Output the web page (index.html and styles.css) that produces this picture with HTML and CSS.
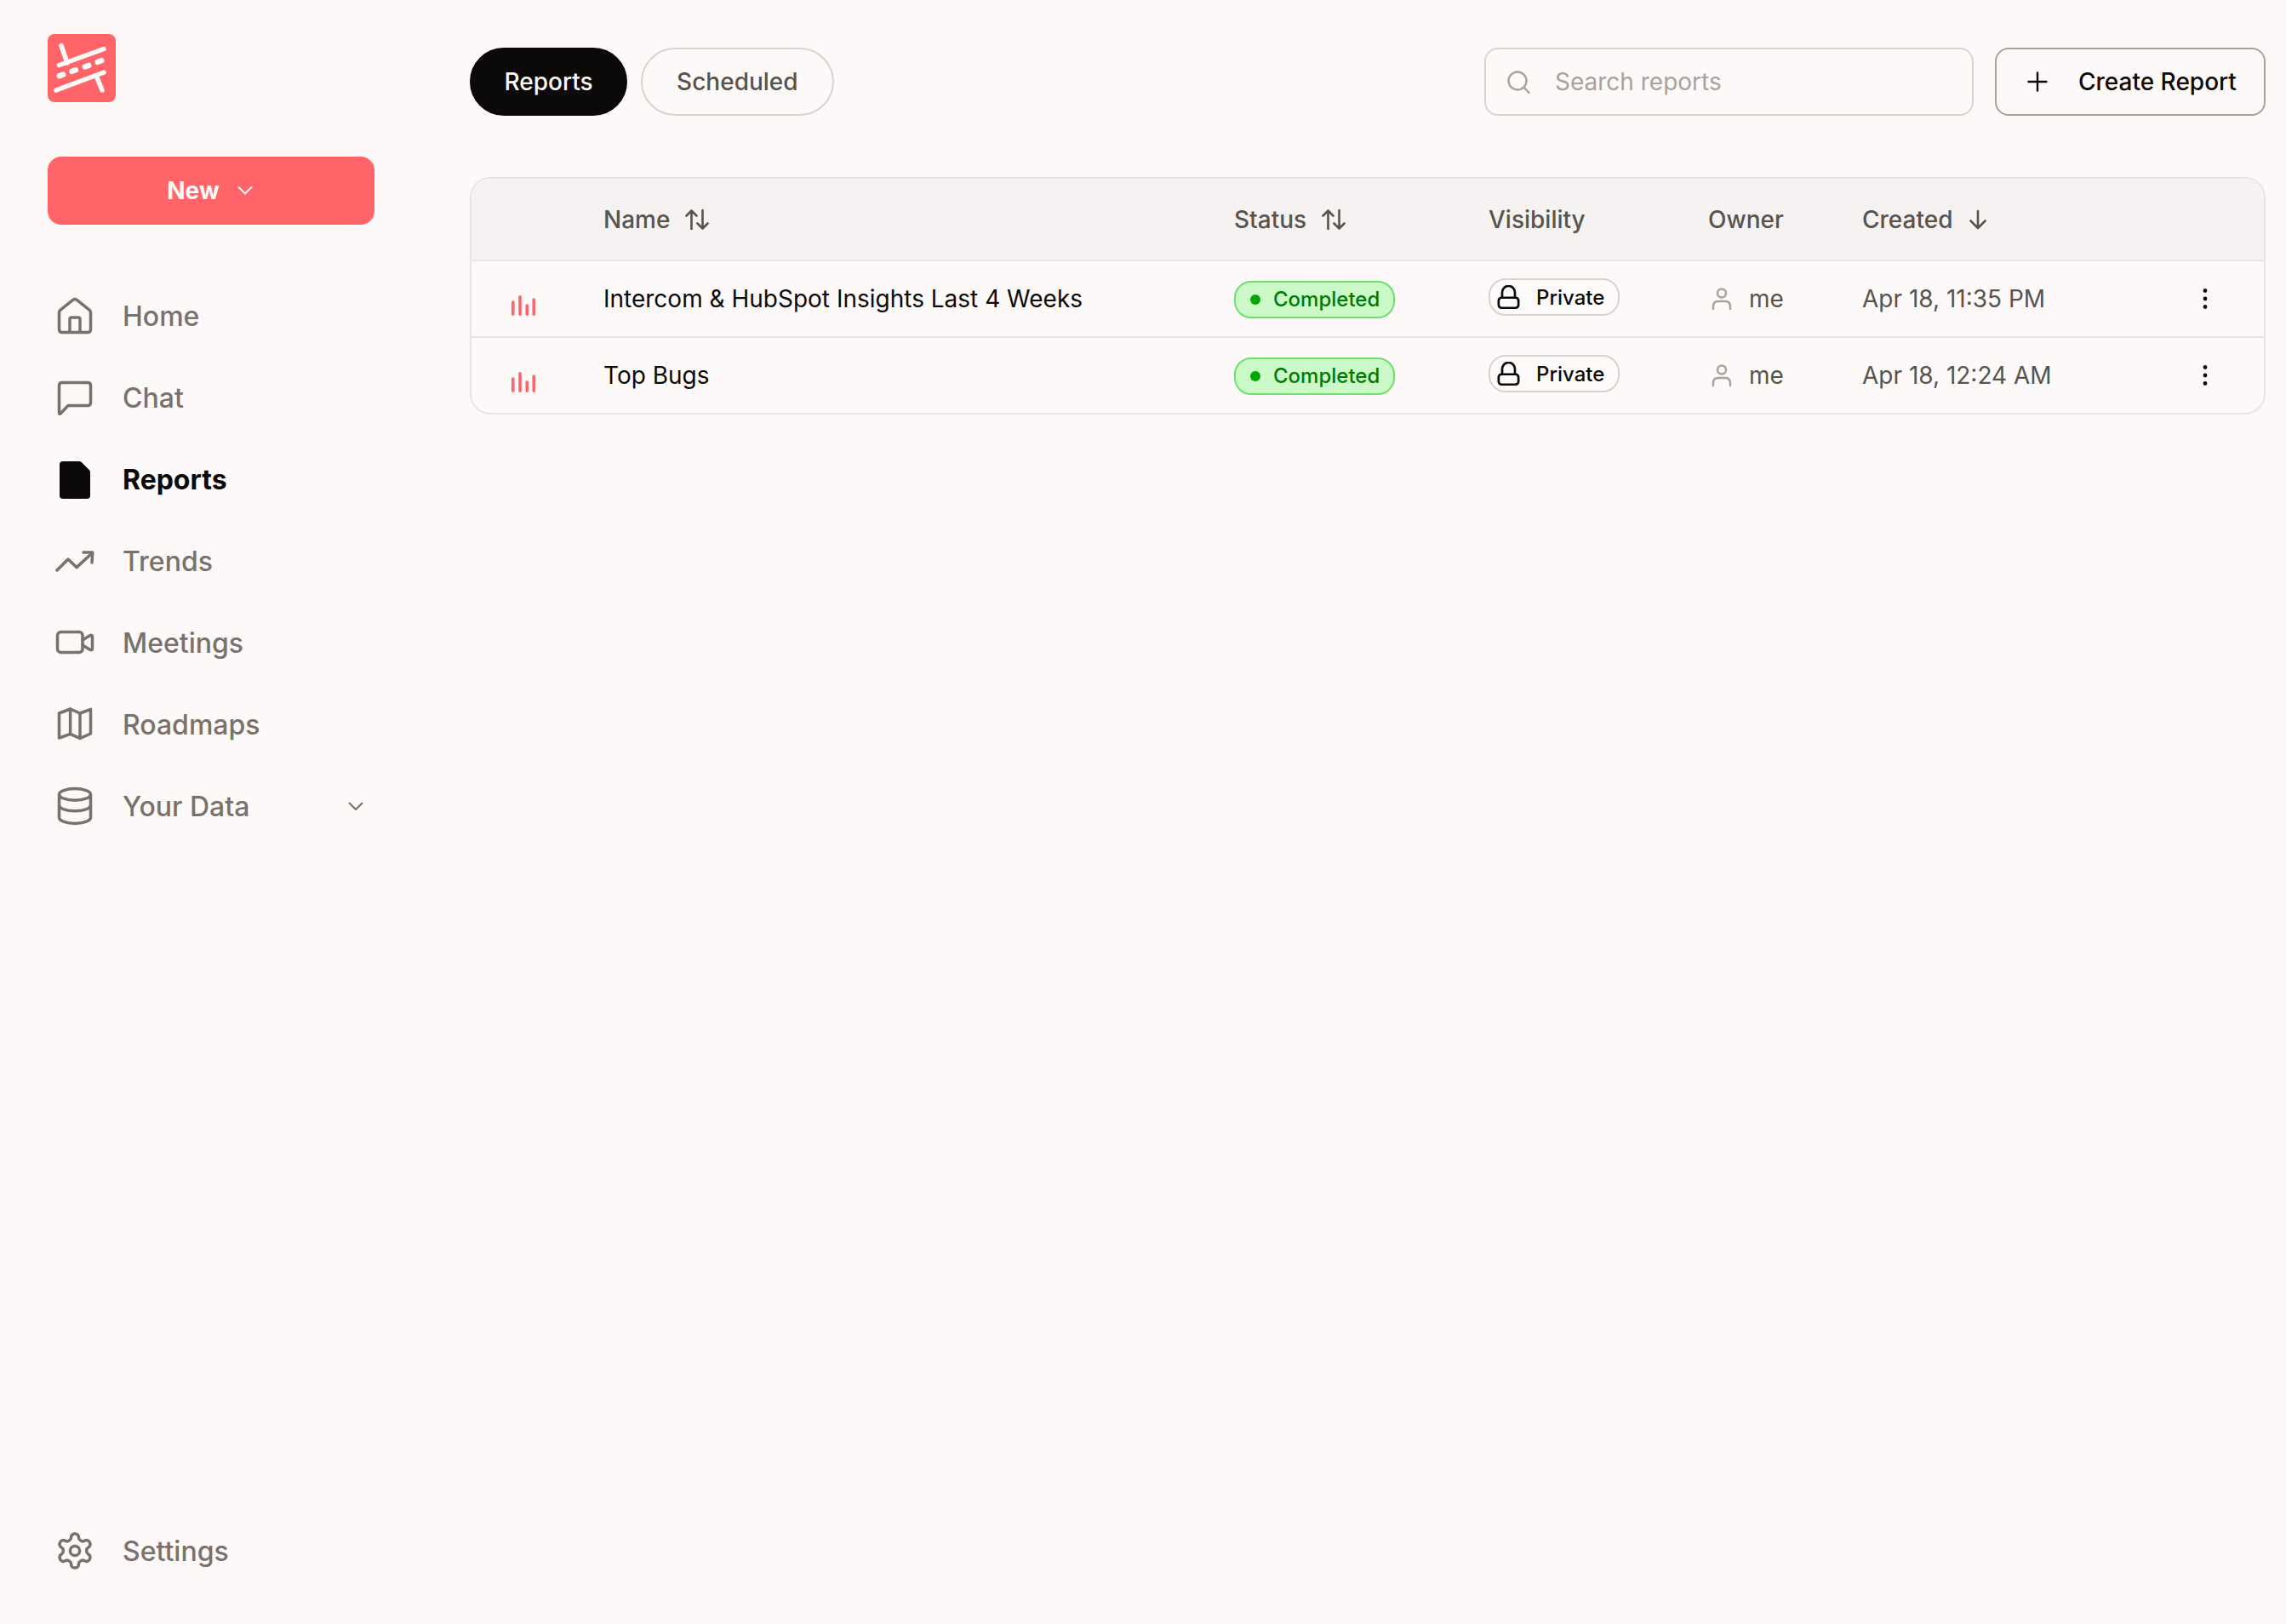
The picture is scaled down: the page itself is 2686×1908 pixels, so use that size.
FILE: index.html
```html
<!DOCTYPE html>
<html lang="en">
<head>
  <meta charset="UTF-8" />
  <title>Reports</title>
  <link rel="stylesheet" href="styles.css">
</head>
<body>
  <aside class="sidebar">
    <div class="logo">
      <svg viewBox="0 0 80 80" width="80" height="80">
        <rect width="80" height="80" rx="8" fill="#ff6568"/>
        <g stroke="#fdf9f8" stroke-width="5.5" stroke-linecap="round" fill="none">
          <path d="M16 13.5 23 34"/>
          <path d="M13.5 36.5 66 17.5"/>
          <path d="M13.8 49.1 18.2 47.5M28.5 43.8 32.9 42.2M43.8 38.5 48.2 36.9M58.8 32.8 63.2 31.2" stroke-width="6.5"/>
          <path d="M10 66 66 45"/>
          <path d="M57.5 50 64 66"/>
        </g>
      </svg>
    </div>

    <button class="new-btn">
      <span>New</span>
      <svg viewBox="0 0 24 24" width="24" height="24" fill="none" stroke="#fdf9f8" stroke-width="2" stroke-linecap="round" stroke-linejoin="round"><path d="M4.5 8 12 15.5 19.5 8"/></svg>
    </button>

    <nav class="side-nav">
      <a class="nav-item" href="#">
        <svg class="nav-icon" viewBox="0 0 24 24"><path d="M2.75 10.2Q2.75 9.2 3.5 8.6L11 2.6Q12 1.9 13 2.6L20.5 8.6Q21.25 9.2 21.25 10.2V20Q21.25 21.75 19.5 21.75H4.5Q2.75 21.75 2.75 20Z"/><path d="M9 21.75V14Q9 13 10 13H14Q15 13 15 14V21.75"/></svg>
        <span>Home</span>
      </a>
      <a class="nav-item" href="#">
        <svg class="nav-icon" viewBox="0 0 24 24"><path d="M4.5 3.25H19.5Q21.25 3.25 21.25 5V15Q21.25 16.75 19.5 16.75H8L3.5 21.5Q2.75 22.1 2.75 21V5Q2.75 3.25 4.5 3.25Z"/></svg>
        <span>Chat</span>
      </a>
      <a class="nav-item active" href="#">
        <svg class="nav-icon" viewBox="0 0 24 24"><path class="solid" d="M5 1.5H14.6Q15.4 1.5 16 2.1L20.4 6.5Q21 7.1 21 7.9V21.5Q21 23.5 19 23.5H5Q3 23.5 3 21.5V3.5Q3 1.5 5 1.5Z"/></svg>
        <span>Reports</span>
      </a>
      <a class="nav-item" href="#">
        <svg class="nav-icon" viewBox="0 0 24 24"><path d="M1.5 17.5 8 11 13 15.8 22 7.5"/><path d="M17 7H22.4L22 13"/></svg>
        <span>Trends</span>
      </a>
      <a class="nav-item" href="#">
        <svg class="nav-icon" viewBox="0 0 24 24"><rect x="1.75" y="5.75" width="14.75" height="12" rx="2"/><path d="M16.5 10.5 21 7.8Q22.25 7.3 22.25 8.5V15.5Q22.25 16.7 21 16.2L16.5 13.5"/></svg>
        <span>Meetings</span>
      </a>
      <a class="nav-item" href="#">
        <svg class="nav-icon" viewBox="0 0 24 24"><path d="M2.75 5.5 9.3 3 15 5.5 21.25 3.2V17.5L15 20.2 9.3 17.7 2.75 20Z"/><path d="M9.3 3V17.7M15 5.5V20.2"/></svg>
        <span>Roadmaps</span>
      </a>
      <a class="nav-item" href="#">
        <svg class="nav-icon" viewBox="0 0 24 24"><ellipse cx="12" cy="5.2" rx="9.25" ry="3.4"/><path d="M2.75 5.2V18.8C2.75 20.7 6.9 22.2 12 22.2S21.25 20.7 21.25 18.8V5.2"/><path d="M2.75 11.5C2.75 13.4 6.9 14.9 12 14.9S21.25 13.4 21.25 11.5"/></svg>
        <span>Your Data</span>
        <svg class="nav-caret" viewBox="0 0 24 24" width="32" height="32"><path d="M6.5 9.5 12 15 17.5 9.5"/></svg>
      </a>
    </nav>

    <a class="nav-item settings" href="#">
      <svg class="nav-icon" viewBox="0 0 24 24"><path d="M12.22 2h-.44a2 2 0 0 0-2 2v.18a2 2 0 0 1-1 1.73l-.43.25a2 2 0 0 1-2 0l-.15-.08a2 2 0 0 0-2.73.73l-.22.38a2 2 0 0 0 .73 2.73l.15.1a2 2 0 0 1 1 1.72v.51a2 2 0 0 1-1 1.74l-.15.09a2 2 0 0 0-.73 2.73l.22.38a2 2 0 0 0 2.73.73l.15-.08a2 2 0 0 1 2 0l.43.25a2 2 0 0 1 1 1.73V20a2 2 0 0 0 2 2h.44a2 2 0 0 0 2-2v-.18a2 2 0 0 1 1-1.73l.43-.25a2 2 0 0 1 2 0l.15.08a2 2 0 0 0 2.73-.73l.22-.39a2 2 0 0 0-.73-2.73l-.15-.08a2 2 0 0 1-1-1.74v-.5a2 2 0 0 1 1-1.74l.15-.09a2 2 0 0 0 .73-2.73l-.22-.38a2 2 0 0 0-2.73-.73l-.15.08a2 2 0 0 1-2 0l-.43-.25a2 2 0 0 1-1-1.73V4a2 2 0 0 0-2-2z"/><circle cx="12" cy="12" r="2.8"/></svg>
      <span>Settings</span>
    </a>
  </aside>

  <main class="content">
    <div class="toolbar">
      <div class="tabs">
        <button class="tab active">Reports</button>
        <button class="tab">Scheduled</button>
      </div>
      <div class="actions">
        <label class="search">
          <svg viewBox="0 0 28 28" width="28" height="28" fill="none" stroke="#a8a29e" stroke-width="2.4" stroke-linecap="round"><circle cx="13" cy="13" r="10.5"/><path d="M21 21 26.5 27"/></svg>
          <input type="text" placeholder="Search reports">
        </label>
        <button class="create-btn">
          <svg viewBox="0 0 24 24" width="24" height="24" fill="none" stroke="#0c0a09" stroke-width="2.4" stroke-linecap="round"><path d="M12 1.5V22.5M1.5 12H22.5"/></svg>
          <span>Create Report</span>
        </button>
      </div>
    </div>

    <div class="table">
      <div class="row head">
        <div></div>
        <div class="th">Name
          <svg class="sort" viewBox="0 0 28 24" width="28" height="24"><path d="M7.5 23V1.5M1.5 7.5 7.5 1.5 13.5 7.5"/><path d="M20.5 1V22.5M14.5 16.5 20.5 22.5 26.5 16.5"/></svg>
        </div>
        <div class="th">Status
          <svg class="sort" viewBox="0 0 28 24" width="28" height="24"><path d="M7.5 23V1.5M1.5 7.5 7.5 1.5 13.5 7.5"/><path d="M20.5 1V22.5M14.5 16.5 20.5 22.5 26.5 16.5"/></svg>
        </div>
        <div class="th">Visibility</div>
        <div class="th">Owner</div>
        <div class="th">Created
          <svg class="sort" viewBox="0 0 24 24" width="24" height="24"><path d="M12 2V22M3.5 13.5 12 22 20.5 13.5"/></svg>
        </div>
        <div></div>
      </div>

      <div class="row">
        <div class="type-cell">
          <svg class="bars" viewBox="0 0 28 24" width="28" height="24"><path d="M1.8 8V22.2M10 1.8V22.2M18.2 12V22.2M26.2 5V22.2"/></svg>
        </div>
        <div class="name">Intercom &amp; HubSpot Insights Last 4 Weeks</div>
        <div><span class="status-pill"><i class="dot"></i>Completed</span></div>
        <div>
          <span class="vis-pill">
            <svg viewBox="0 0 26 28" width="27" height="28" fill="none" stroke="#0c0a09" stroke-width="2.7"><path d="M5.5 15V8.5A7.5 7.5 0 0 1 20.5 8.5V15"/><rect x="1.35" y="14.75" width="23.3" height="12" rx="3.5"/></svg>
            Private
          </span>
        </div>
        <div class="owner">
          <svg viewBox="0 0 32 32" width="32" height="32" fill="none" stroke="#a8a29e" stroke-width="2.4" stroke-linecap="round"><circle cx="16" cy="9.5" r="5"/><path d="M6 28V25Q6 19 12 19H20Q26 19 26 25V28"/></svg>
          me
        </div>
        <div class="date">Apr 18, 11:35 PM</div>
        <div class="more">
          <svg viewBox="0 0 6 26" width="6" height="26" fill="#0c0a09"><circle cx="3" cy="3.5" r="2.4"/><circle cx="3" cy="13" r="2.4"/><circle cx="3" cy="22.5" r="2.4"/></svg>
        </div>
      </div>

      <div class="row">
        <div class="type-cell">
          <svg class="bars" viewBox="0 0 28 24" width="28" height="24"><path d="M1.8 8V22.2M10 1.8V22.2M18.2 12V22.2M26.2 5V22.2"/></svg>
        </div>
        <div class="name">Top Bugs</div>
        <div><span class="status-pill"><i class="dot"></i>Completed</span></div>
        <div>
          <span class="vis-pill">
            <svg viewBox="0 0 26 28" width="27" height="28" fill="none" stroke="#0c0a09" stroke-width="2.7"><path d="M5.5 15V8.5A7.5 7.5 0 0 1 20.5 8.5V15"/><rect x="1.35" y="14.75" width="23.3" height="12" rx="3.5"/></svg>
            Private
          </span>
        </div>
        <div class="owner">
          <svg viewBox="0 0 32 32" width="32" height="32" fill="none" stroke="#a8a29e" stroke-width="2.4" stroke-linecap="round"><circle cx="16" cy="9.5" r="5"/><path d="M6 28V25Q6 19 12 19H20Q26 19 26 25V28"/></svg>
          me
        </div>
        <div class="date">Apr 18, 12:24 AM</div>
        <div class="more">
          <svg viewBox="0 0 6 26" width="6" height="26" fill="#0c0a09"><circle cx="3" cy="3.5" r="2.4"/><circle cx="3" cy="13" r="2.4"/><circle cx="3" cy="22.5" r="2.4"/></svg>
        </div>
      </div>
    </div>
  </main>
</body>
</html>
```

FILE: styles.css
```css
html, body {
  margin: 0;
  padding: 0;
}

body {
  font-family: Inter, 'Noto Sans', sans-serif;
  background-color: #fcf9f8;
  color: #0c0a09;
  height: 100vh;
  display: flex;
  overflow: hidden;
}

button {
  font-family: inherit;
  cursor: pointer;
}

.sidebar {
  width: 552px;
  flex-shrink: 0;
  box-sizing: border-box;
  padding: 40px 112px 38px 56px;
  display: flex;
  flex-direction: column;
}

.logo {
  height: 80px;
}

.logo svg {
  display: block;
}

.new-btn {
  margin-top: 64px;
  height: 80px;
  border: none;
  border-radius: 16px;
  background: #ff6568;
  color: #fdf9f8;
  font-size: 28px;
  font-weight: 700;
  display: flex;
  align-items: center;
  justify-content: center;
  gap: 18px;
}

.side-nav {
  margin-top: 59px;
  flex: 1;
}

.nav-item {
  height: 96px;
  padding: 0 6px 0 8px;
  display: flex;
  align-items: center;
  gap: 32px;
  color: #78716c;
  font-size: 32px;
  font-weight: 500;
  text-decoration: none;
}

.nav-item.active {
  color: #0c0a09;
  font-weight: 700;
}

.nav-icon {
  width: 48px;
  height: 48px;
  flex-shrink: 0;
  fill: none;
  stroke: #78716c;
  stroke-width: 1.75;
  stroke-linecap: round;
  stroke-linejoin: round;
}

.nav-icon .solid {
  fill: #0c0a09;
  stroke: none;
}

.nav-caret {
  margin-left: auto;
  fill: none;
  stroke: #78716c;
  stroke-width: 1.6;
  stroke-linecap: round;
  stroke-linejoin: round;
}

.content {
  flex: 1;
  min-width: 0;
  padding: 56px 24px 0 0;
}

.toolbar {
  display: flex;
  justify-content: space-between;
  align-items: center;
}

.tabs {
  display: flex;
  gap: 16px;
}

.tab {
  height: 80px;
  padding: 0 40px;
  border-radius: 40px;
  border: 2px solid #d6d3d1;
  background: transparent;
  color: #57534e;
  font-size: 28px;
  font-weight: 500;
}

.tab.active {
  padding: 0 38.5px;
  background: #0c0a09;
  border-color: #0c0a09;
  color: #fdf9f8;
}

.actions {
  display: flex;
  gap: 25px;
}

.search {
  width: 575px;
  height: 80px;
  box-sizing: border-box;
  border: 2px solid #d6d3d1;
  border-radius: 16px;
  padding-left: 24px;
  display: flex;
  align-items: center;
  gap: 27px;
}

.search input {
  flex: 1;
  min-width: 0;
  border: none;
  outline: none;
  background: transparent;
  font-family: inherit;
  font-size: 28px;
  color: #0c0a09;
}

.search input::placeholder {
  color: #a8a29e;
  opacity: 1;
}

.create-btn {
  width: 318px;
  height: 80px;
  box-sizing: border-box;
  border: 2px solid #a8a29e;
  border-radius: 16px;
  background: transparent;
  color: #0c0a09;
  font-size: 28px;
  font-weight: 500;
  padding: 0 0 0 36px;
  display: flex;
  align-items: center;
  gap: 36px;
}

.table {
  margin-top: 72px;
  border: 2px solid #e7e5e4;
  border-radius: 24px;
  overflow: hidden;
}

.row {
  display: grid;
  grid-template-columns: 155px 741px 299px 258px 181px 1fr 139px;
  align-items: center;
  height: 88px;
  border-top: 2px solid #e7e5e4;
  font-size: 28px;
}

.row.head {
  height: 95px;
  border-top: none;
  background: #f5f2f1;
}

.th {
  display: flex;
  align-items: center;
  gap: 18px;
  color: #57534e;
  font-weight: 500;
}

.sort {
  fill: none;
  stroke: #57534e;
  stroke-width: 2.6;
  stroke-linecap: round;
  stroke-linejoin: round;
}

.type-cell {
  padding-left: 47px;
  padding-top: 16px;
}

.bars {
  display: block;
  fill: none;
  stroke: #ff6568;
  stroke-width: 3.6;
  stroke-linecap: round;
}

.status-pill {
  display: inline-flex;
  align-items: center;
  box-sizing: border-box;
  height: 44px;
  width: 189px;
  margin-top: 1px;
  padding-left: 17px;
  gap: 15px;
  border: 2px solid #6ee06e;
  border-radius: 20px;
  background: #ccf9c8;
  color: #007a00;
  font-size: 24px;
  font-weight: 500;
}

.dot {
  width: 12px;
  height: 12px;
  border-radius: 50%;
  background: #00a800;
}

.vis-pill {
  display: inline-flex;
  align-items: center;
  box-sizing: border-box;
  height: 44px;
  width: 154px;
  margin-bottom: 4px;
  padding-left: 8px;
  gap: 19px;
  border: 2px solid #d6d3d1;
  border-radius: 20px;
  background: #fdfbfa;
  font-size: 24px;
  font-weight: 500;
}

.owner {
  display: flex;
  align-items: center;
  gap: 16px;
  color: #57534e;
}

.date {
  color: #57534e;
}

.more {
  display: flex;
  justify-content: center;
}
```
